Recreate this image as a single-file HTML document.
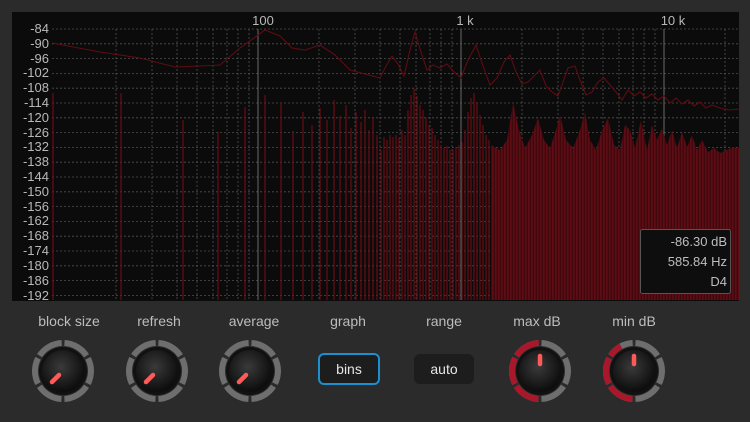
<!DOCTYPE html>
<html><head><meta charset="utf-8"><style>
html,body{margin:0;padding:0;background:#2b2b2c;width:750px;height:422px;overflow:hidden;font-family:"Liberation Sans",sans-serif}
.lbl{position:absolute;top:313px;color:#bdbdbd;font-size:14px;text-align:center;width:100px}
.btn{position:absolute;top:354px;height:30px;width:60px;border-radius:6px;background:#1d1d1e;color:#e6e6e6;font-size:14px;text-align:center;line-height:30px}
</style></head><body>
<svg width="750" height="422" style="position:absolute;left:0;top:0">
<defs>
<pattern id="st" width="3" height="10" patternUnits="userSpaceOnUse"><rect width="3" height="10" fill="#3e080d"/><rect width="1.6" height="10" fill="#5e0d15"/></pattern>
<radialGradient id="kg" cx="45%" cy="40%" r="60%"><stop offset="0" stop-color="#3a3a3a"/><stop offset="1" stop-color="#0c0c0c"/></radialGradient>
</defs>
<rect x="12" y="12" width="727" height="289" fill="#0b0b0b"/>
<rect x="739" y="12" width="11" height="289" fill="#2b2b2c"/>
<g stroke="#505050" stroke-width="0.8" stroke-dasharray="2 2">
<line x1="52" y1="29" x2="739" y2="29"/><line x1="52" y1="43.8" x2="739" y2="43.8"/><line x1="52" y1="58.6" x2="739" y2="58.6"/><line x1="52" y1="73.4" x2="739" y2="73.4"/><line x1="52" y1="88.2" x2="739" y2="88.2"/><line x1="52" y1="103" x2="739" y2="103"/><line x1="52" y1="117.8" x2="739" y2="117.8"/><line x1="52" y1="132.6" x2="739" y2="132.6"/><line x1="52" y1="147.4" x2="739" y2="147.4"/><line x1="52" y1="162.2" x2="739" y2="162.2"/><line x1="52" y1="177" x2="739" y2="177"/><line x1="52" y1="191.8" x2="739" y2="191.8"/><line x1="52" y1="206.6" x2="739" y2="206.6"/><line x1="52" y1="221.4" x2="739" y2="221.4"/><line x1="52" y1="236.2" x2="739" y2="236.2"/><line x1="52" y1="251" x2="739" y2="251"/><line x1="52" y1="265.8" x2="739" y2="265.8"/><line x1="52" y1="280.6" x2="739" y2="280.6"/><line x1="52" y1="295.4" x2="739" y2="295.4"/>
<line x1="116" y1="29" x2="116" y2="300"/><line x1="152" y1="29" x2="152" y2="300"/><line x1="177" y1="29" x2="177" y2="300"/><line x1="197" y1="29" x2="197" y2="300"/><line x1="213" y1="29" x2="213" y2="300"/><line x1="227" y1="29" x2="227" y2="300"/><line x1="238" y1="29" x2="238" y2="300"/><line x1="249" y1="29" x2="249" y2="300"/>
<line x1="319" y1="29" x2="319" y2="300"/><line x1="355" y1="29" x2="355" y2="300"/><line x1="380" y1="29" x2="380" y2="300"/><line x1="400" y1="29" x2="400" y2="300"/><line x1="416" y1="29" x2="416" y2="300"/><line x1="430" y1="29" x2="430" y2="300"/><line x1="441" y1="29" x2="441" y2="300"/><line x1="452" y1="29" x2="452" y2="300"/>
<line x1="522" y1="29" x2="522" y2="300"/><line x1="558" y1="29" x2="558" y2="300"/><line x1="583" y1="29" x2="583" y2="300"/><line x1="603" y1="29" x2="603" y2="300"/><line x1="619" y1="29" x2="619" y2="300"/><line x1="633" y1="29" x2="633" y2="300"/><line x1="644" y1="29" x2="644" y2="300"/><line x1="655" y1="29" x2="655" y2="300"/><line x1="725" y1="29" x2="725" y2="300"/>
</g>
<g stroke="#6a6a6a" stroke-width="1"><line x1="258" y1="29" x2="258" y2="300"/><line x1="461" y1="29" x2="461" y2="300"/><line x1="664" y1="29" x2="664" y2="300"/></g>
<g stroke="#6a0d16" stroke-width="1.2">
<line x1="53" y1="93" x2="53" y2="300"/><line x1="121" y1="93" x2="121" y2="300"/><line x1="183" y1="120" x2="183" y2="300"/><line x1="218" y1="132" x2="218" y2="300"/><line x1="245" y1="107" x2="245" y2="300"/><line x1="265" y1="95" x2="265" y2="300"/><line x1="281" y1="103" x2="281" y2="300"/><line x1="293" y1="131" x2="293" y2="300"/><line x1="303" y1="112" x2="303" y2="300"/><line x1="312" y1="125" x2="312" y2="300"/><line x1="320" y1="108" x2="320" y2="300"/><line x1="327" y1="120" x2="327" y2="300"/><line x1="334" y1="100" x2="334" y2="300"/><line x1="340" y1="116" x2="340" y2="300"/><line x1="346" y1="105" x2="346" y2="300"/><line x1="351" y1="128" x2="351" y2="300"/><line x1="356" y1="112" x2="356" y2="300"/><line x1="361" y1="122" x2="361" y2="300"/><line x1="365" y1="110" x2="365" y2="300"/><line x1="369" y1="130" x2="369" y2="300"/><line x1="373" y1="118" x2="373" y2="300"/><line x1="377" y1="135" x2="377" y2="300"/><line x1="381" y1="150" x2="381" y2="300"/><line x1="384" y1="137" x2="384" y2="300"/><line x1="387" y1="140" x2="387" y2="300"/><line x1="390" y1="135" x2="390" y2="300"/><line x1="393" y1="137" x2="393" y2="300"/><line x1="396" y1="135" x2="396" y2="300"/><line x1="399" y1="138" x2="399" y2="300"/><line x1="402" y1="130" x2="402" y2="300"/><line x1="405" y1="135" x2="405" y2="300"/><line x1="408" y1="110" x2="408" y2="300"/><line x1="411" y1="95" x2="411" y2="300"/><line x1="414" y1="88" x2="414" y2="300"/><line x1="417" y1="96" x2="417" y2="300"/><line x1="420" y1="105" x2="420" y2="300"/><line x1="423" y1="110" x2="423" y2="300"/><line x1="426" y1="118" x2="426" y2="300"/><line x1="429" y1="125" x2="429" y2="300"/><line x1="432" y1="128" x2="432" y2="300"/><line x1="435" y1="135" x2="435" y2="300"/><line x1="438" y1="140" x2="438" y2="300"/><line x1="441" y1="145" x2="441" y2="300"/><line x1="444" y1="148" x2="444" y2="300"/><line x1="447" y1="146" x2="447" y2="300"/><line x1="450" y1="150" x2="450" y2="300"/><line x1="453" y1="150" x2="453" y2="300"/><line x1="456" y1="147" x2="456" y2="300"/><line x1="459" y1="145" x2="459" y2="300"/><line x1="462" y1="142" x2="462" y2="300"/><line x1="465" y1="130" x2="465" y2="300"/><line x1="468" y1="112" x2="468" y2="300"/><line x1="471" y1="98" x2="471" y2="300"/><line x1="474" y1="93" x2="474" y2="300"/><line x1="477" y1="102" x2="477" y2="300"/><line x1="480" y1="115" x2="480" y2="300"/><line x1="483" y1="125" x2="483" y2="300"/><line x1="486" y1="135" x2="486" y2="300"/><line x1="489" y1="140" x2="489" y2="300"/>
</g>
<path d="M491,300 L491,145 500,150 507,140 513,103 519,130 525,148 532,135 538,118 544,140 550,148 556,130 560,115 566,140 573,148 580,130 585,112 590,140 596,150 602,130 608,118 614,145 620,150 625,125 630,130 635,148 641,120 647,150 652,125 657,140 662,128 667,145 672,130 677,148 682,132 687,147 692,135 697,150 702,140 708,152 714,148 720,153 727,150 733,147 739,148 L739,300 Z" fill="url(#st)"/>
<polyline fill="none" stroke="#5e0c14" stroke-width="1.1" points="52,43 100,52 140,58 175,67 200,66 220,65 240,48 258,35 265,30 280,36 292,48 305,50 320,45 335,55 350,70 365,74 380,78 386,66 392,56 398,64 404,76 410,50 415,32 421,52 427,70 433,65 440,68 447,64 454,72 461,78 468,60 476,45 483,66 490,85 497,78 504,62 510,55 516,72 522,84 528,82 534,76 540,70 546,86 552,92 558,96 563,82 568,68 575,66 580,80 586,95 592,92 598,82 604,78 610,85 616,92 622,100 628,90 634,96 640,92 646,98 652,94 658,100 664,96 670,103 676,98 682,104 688,100 694,106 700,102 706,108 712,105 720,108 730,110 739,109"/>
<g fill="#b8b8b8" font-size="13" font-family="Liberation Sans,sans-serif" text-anchor="end">
<text x="49" y="33">-84</text><text x="49" y="48">-90</text><text x="49" y="63">-96</text><text x="49" y="77">-102</text><text x="49" y="92">-108</text><text x="49" y="107">-114</text><text x="49" y="122">-120</text><text x="49" y="137">-126</text><text x="49" y="151">-132</text><text x="49" y="166">-138</text><text x="49" y="181">-144</text><text x="49" y="196">-150</text><text x="49" y="211">-156</text><text x="49" y="225">-162</text><text x="49" y="240">-168</text><text x="49" y="255">-174</text><text x="49" y="270">-180</text><text x="49" y="285">-186</text><text x="49" y="300">-192</text>
</g>
<g fill="#b8b8b8" font-size="13" font-family="Liberation Sans,sans-serif" text-anchor="middle">
<text x="263" y="25">100</text><text x="465" y="25">1 k</text><text x="673" y="25">10 k</text>
</g>
<rect x="640.5" y="229.5" width="90" height="64" rx="2" fill="#0e0e0e" stroke="#555"/>
<g fill="#bdbdbd" font-size="13" font-family="Liberation Sans,sans-serif" text-anchor="end">
<text x="727" y="246">-86.30 dB</text><text x="727" y="266">585.84 Hz</text><text x="727" y="286">D4</text>
</g>
<g id="k1" transform="translate(63,371)">
<circle r="28" fill="none" stroke="#6e6e6e" stroke-width="6" stroke-dasharray="26.3 3" transform="rotate(-87)"/>
<circle r="24" fill="#111"/><circle r="21" fill="url(#kg)"/>
<line x1="-4" y1="4" x2="-11" y2="11" stroke="#ff5a5a" stroke-width="4.5" stroke-linecap="round"/>
</g>
<use href="#k1" x="94" y="0"/><use href="#k1" x="187" y="0"/>
<g transform="translate(540,371)">
<circle r="28" fill="none" stroke="#6e6e6e" stroke-width="6" stroke-dasharray="26.3 3" transform="rotate(-87)"/>
<circle r="28" fill="none" stroke="#a8182a" stroke-width="6" stroke-dasharray="0 88 26.3 3 26.3 3 26.3 3 30" transform="rotate(-87)"/>
<circle r="24" fill="#111"/><circle r="21" fill="url(#kg)"/>
<line x1="0" y1="-7" x2="0" y2="-15" stroke="#ff5a5a" stroke-width="4.5" stroke-linecap="round"/>
</g>
<g transform="translate(634,371)">
<circle r="28" fill="none" stroke="#6e6e6e" stroke-width="6" stroke-dasharray="26.3 3" transform="rotate(-87)"/>
<circle r="28" fill="none" stroke="#a8182a" stroke-width="6" stroke-dasharray="0 88 26.3 3 26.3 3 14 50" transform="rotate(-87)"/>
<circle r="24" fill="#111"/><circle r="21" fill="url(#kg)"/>
<line x1="0" y1="-7" x2="0" y2="-15" stroke="#ff5a5a" stroke-width="4.5" stroke-linecap="round"/>
</g>
</svg>
<div class="lbl" style="left:19px">block size</div>
<div class="lbl" style="left:109px">refresh</div>
<div class="lbl" style="left:204px">average</div>
<div class="lbl" style="left:298px">graph</div>
<div class="lbl" style="left:394px">range</div>
<div class="lbl" style="left:487px">max dB</div>
<div class="lbl" style="left:584px">min dB</div>
<div class="btn" style="left:318px;top:353px;width:58px;height:28px;border:2px solid #1b8fd0;line-height:28px">bins</div>
<div class="btn" style="left:414px">auto</div>
</body></html>
